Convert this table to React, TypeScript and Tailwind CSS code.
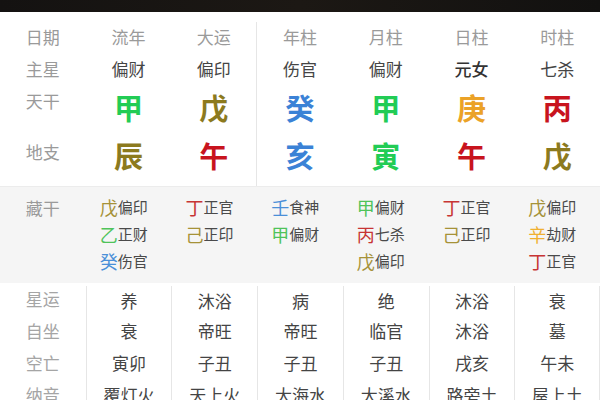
import React from "react";

const cols = ["流年", "大运", "年柱", "月柱", "日柱", "时柱"];
const zhuxing = ["偏财", "偏印", "伤官", "偏财", "元女", "七杀"];

// 天干 / 地支 with their element colours
const tiangan = [
  { c: "甲", cls: "text-[#22cc55]" },
  { c: "戊", cls: "text-[#8c7a1e]" },
  { c: "癸", cls: "text-[#3b82d6]" },
  { c: "甲", cls: "text-[#22cc55]" },
  { c: "庚", cls: "text-[#eba227]" },
  { c: "丙", cls: "text-[#c8141e]" },
];
const dizhi = [
  { c: "辰", cls: "text-[#8c7a1e]" },
  { c: "午", cls: "text-[#c8141e]" },
  { c: "亥", cls: "text-[#3b82d6]" },
  { c: "寅", cls: "text-[#22cc55]" },
  { c: "午", cls: "text-[#c8141e]" },
  { c: "戊", cls: "text-[#8c7a1e]" },
];

const G = "text-[#4fc35a]";
const Y = "text-[#a69238]";
const B = "text-[#4a8fd8]";
const R = "text-[#c73434]";
const O = "text-[#f0b030]";

const canggan = [
  [["戊", "偏印", Y], ["乙", "正财", G], ["癸", "伤官", B]],
  [["丁", "正官", R], ["己", "正印", Y]],
  [["壬", "食神", B], ["甲", "偏财", G]],
  [["甲", "偏财", G], ["丙", "七杀", R], ["戊", "偏印", Y]],
  [["丁", "正官", R], ["己", "正印", Y]],
  [["戊", "偏印", Y], ["辛", "劫财", O], ["丁", "正官", R]],
];

const bottom = [
  { label: "星运", vals: ["养", "沐浴", "病", "绝", "沐浴", "衰"] },
  { label: "自坐", vals: ["衰", "帝旺", "帝旺", "临官", "沐浴", "墓"] },
  { label: "空亡", vals: ["寅卯", "子丑", "子丑", "子丑", "戌亥", "午未"] },
  { label: "纳音", vals: ["覆灯火", "天上火", "大海水", "大溪水", "路旁土", "屋上土"] },
];

const font = { fontFamily: '"Noto Sans CJK SC", "Noto Sans", sans-serif' };

function Sep({ i }: { i: number }) {
  return i === 1 ? "border-r border-[#e6e6e6]" : "";
}

export default function App() {
  return (
    <div className="w-[600px] h-[400px] overflow-hidden bg-white" style={font}>
      <div className="h-[12px] bg-gradient-to-r from-[#141211] via-[#1c1814] to-[#121110]" />

      {/* 四柱 */}
      <div className="grid grid-cols-7 pt-[10px]">
        <div className="h-[30px] flex items-center justify-center text-[17px] text-[#9a9a9a]">日期</div>
        {cols.map((c, i) => (
          <div key={c} className={`h-[30px] flex items-center justify-center text-[17px] text-[#9a9a9a] ${Sep({ i })}`}>
            {c}
          </div>
        ))}

        <div className="h-[34px] flex items-center justify-center text-[17px] text-[#9a9a9a]">主星</div>
        {zhuxing.map((c, i) => (
          <div
            key={i}
            className={`h-[34px] flex items-center justify-center text-[17px] ${i === 4 ? "text-[#333] font-medium" : "text-[#454545]"} ${Sep({ i })}`}
          >
            {c}
          </div>
        ))}

        <div className="h-[44px] flex items-center justify-center text-[17px] text-[#9a9a9a] pb-[14px]">天干</div>
        {tiangan.map((t, i) => (
          <div key={i} className={`h-[44px] flex items-center justify-center text-[29px] font-bold ${t.cls} ${Sep({ i })}`}>
            {t.c}
          </div>
        ))}

        <div className="h-[56px] flex items-center justify-center text-[17px] text-[#9a9a9a] pb-[12px]">地支</div>
        {dizhi.map((t, i) => (
          <div key={i} className={`h-[56px] flex items-center justify-center pb-[4px] text-[29px] font-bold ${t.cls} ${Sep({ i })}`}>
            {t.c}
          </div>
        ))}
      </div>

      {/* 藏干 */}
      <div className="grid grid-cols-7 h-[97px] bg-[#f5f5f5] border-t border-[#ececec] pt-[7px]">
        <div className="h-[27px] flex items-center justify-center text-[17px] text-[#9a9a9a]">藏干</div>
        {canggan.map((list, i) => (
          <div key={i} className="flex flex-col pl-[14px]">
            {list.map(([s, d, cls], j) => (
              <div key={j} className="h-[27px] flex items-center">
                <span className={`text-[18px] ${cls}`}>{s}</span>
                <span className="text-[15px] text-[#4a4a4a]">{d}</span>
              </div>
            ))}
          </div>
        ))}
      </div>

      {/* 星运 etc */}
      <div className="grid grid-cols-7">
        <div className="flex flex-col">
          {bottom.map((r) => (
            <div key={r.label} className="h-[32px] flex items-center justify-center text-[17px] text-[#a5a5a5]">
              {r.label}
            </div>
          ))}
        </div>
        {cols.map((_, ci) => (
          <div
            key={ci}
            className={`flex flex-col mt-[3px] -mb-[3px] border-l border-[#e6e6e6] ${ci === 5 ? "border-r" : ""}`}
          >
            {bottom.map((r, ri) => (
              <div
                key={ri}
                className={`${ri === 0 ? "h-[29px]" : "h-[32px]"} flex items-center justify-center text-[17px] text-[#444]`}
              >
                {r.vals[ci]}
              </div>
            ))}
          </div>
        ))}
      </div>
    </div>
  );
}
